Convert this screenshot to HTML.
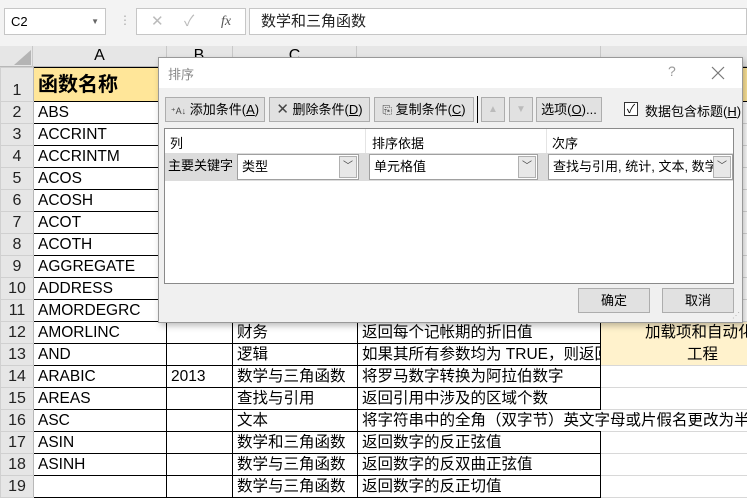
<!DOCTYPE html>
<html><head><meta charset="utf-8"><style>
*{box-sizing:border-box;margin:0;padding:0}
body{width:747px;height:481px;overflow:hidden;background:#fff;position:relative;font-family:"Liberation Sans","Noto Sans CJK SC",sans-serif;font-size:14px;color:#000}
.a{position:absolute}
table{position:absolute;left:0;top:67px;width:747px;border-collapse:collapse;table-layout:fixed}
td{height:22px;border:1px solid #000;padding:0 0 0 4px;white-space:nowrap;overflow:hidden;font-size:15.5px;line-height:20px}
td.h{background:#e6e6e6;border:1px solid #d0d0d0;border-right:1px solid #b8b8b8;text-align:center;padding:0;font-size:16px;color:#222}
td.y{background:#fff2cc;text-align:center;border-color:#fff2cc;border-bottom:1px dotted #999;overflow:visible;padding:0 0 0 44px;text-align:left}
td.e{border:1px solid #d8d8d8;border-left:1px solid #000}
td.v{overflow:visible}
.btn{position:absolute;background:#e1e1e1;border:1px solid #adadad;font-size:13px;text-align:center;line-height:23px;color:#000;white-space:nowrap}
.dd{position:absolute;background:#fff;border:1px solid #a0a0a0;font-size:13px;line-height:23px;padding-left:4px;overflow:hidden;white-space:nowrap}
.arr{position:absolute;right:1px;top:1px;width:18px;height:22px;background:#e8e8e8;border:1px solid #b0b0b0;font-size:10px;text-align:center;line-height:19px;color:#444}
</style></head><body>
<div class="a" style="left:0;top:0;width:747px;height:46px;background:#f3f3f3"></div>
<div class="a" style="left:4px;top:8px;width:102px;height:27px;background:#fff;border:1px solid #c6c6c6;font-size:13px;line-height:25px;padding-left:6px">C2<span style="position:absolute;right:6px;top:0;font-size:8px;color:#666">▼</span></div>
<div class="a" style="left:119px;top:13px;color:#aaa;font-size:12px">⋮</div>
<div class="a" style="left:136px;top:8px;width:110px;height:27px;background:#fff;border:1px solid #c6c6c6;color:#bbb;font-size:15px;line-height:25px"><span style="position:absolute;left:14px">✕</span><span style="position:absolute;left:47px">✓</span><span style="position:absolute;left:84px;color:#555;font-style:italic;font-family:'Liberation Serif',serif;font-size:14px">fx</span></div>
<div class="a" style="left:249px;top:8px;width:498px;height:27px;background:#fff;border:1px solid #c6c6c6;font-size:15px;line-height:25px;padding-left:11px;color:#222">数学和三角函数</div>
<div class="a" style="left:0;top:46px;width:747px;height:21px;background:#e6e6e6;border-bottom:1px solid #b8b8b8"></div>
<div class="a" style="left:14px;top:50px;width:0;height:0;border-left:17px solid transparent;border-bottom:15px solid #b4b4b4"></div>
<div class="a" style="left:32px;top:46px;width:1px;height:21px;background:#c8c8c8"></div>
<div class="a" style="left:33px;top:47px;width:133px;text-align:center;font-size:16px">A</div>
<div class="a" style="left:166px;top:46px;width:1px;height:21px;background:#c8c8c8"></div>
<div class="a" style="left:166px;top:47px;width:66px;text-align:center;font-size:16px">B</div>
<div class="a" style="left:232px;top:46px;width:1px;height:21px;background:#c8c8c8"></div>
<div class="a" style="left:232px;top:47px;width:125px;text-align:center;font-size:16px">C</div>
<div class="a" style="left:356px;top:46px;width:1px;height:21px;background:#c8c8c8"></div>
<div class="a" style="left:600px;top:46px;width:1px;height:21px;background:#c8c8c8"></div>
<table>
<colgroup><col style="width:33px"><col style="width:133px"><col style="width:66px"><col style="width:125px"><col style="width:243px"><col style="width:147px"></colgroup>
<tr style="height:34px"><td class="h" style="height:34px;vertical-align:bottom">1</td><td style="background:#ffe699;font-weight:bold;font-size:20px;height:34px">函数名称</td><td style="background:#ffe699"></td><td style="background:#ffe699"></td><td style="background:#ffe699"></td><td style="background:#ffe699"></td></tr>
<tr><td class="h">2</td><td>ABS</td><td></td><td></td><td></td><td class="e"></td></tr>
<tr><td class="h">3</td><td>ACCRINT</td><td></td><td></td><td></td><td class="e"></td></tr>
<tr><td class="h">4</td><td>ACCRINTM</td><td></td><td></td><td></td><td class="e"></td></tr>
<tr><td class="h">5</td><td>ACOS</td><td></td><td></td><td></td><td class="e"></td></tr>
<tr><td class="h">6</td><td>ACOSH</td><td></td><td></td><td></td><td class="e"></td></tr>
<tr><td class="h">7</td><td>ACOT</td><td></td><td></td><td></td><td class="e"></td></tr>
<tr><td class="h">8</td><td>ACOTH</td><td></td><td></td><td></td><td class="e"></td></tr>
<tr><td class="h">9</td><td>AGGREGATE</td><td></td><td></td><td></td><td class="e"></td></tr>
<tr><td class="h">10</td><td>ADDRESS</td><td></td><td></td><td></td><td class="e"></td></tr>
<tr><td class="h">11</td><td>AMORDEGRC</td><td></td><td></td><td></td><td class="e"></td></tr>
<tr><td class="h">12</td><td>AMORLINC</td><td></td><td>财务</td><td>返回每个记帐期的折旧值</td><td class="y">加载项和自动化</td></tr>
<tr><td class="h">13</td><td>AND</td><td></td><td>逻辑</td><td>如果其所有参数均为 TRUE，则返回</td><td class="y" style="padding-left:86px">工程</td></tr>
<tr><td class="h">14</td><td>ARABIC</td><td>2013</td><td>数学与三角函数</td><td>将罗马数字转换为阿拉伯数字</td><td class="e"></td></tr>
<tr><td class="h">15</td><td>AREAS</td><td></td><td>查找与引用</td><td>返回引用中涉及的区域个数</td><td class="e"></td></tr>
<tr><td class="h">16</td><td>ASC</td><td></td><td>文本</td><td class="v" style="border-right:none">将字符串中的全角（双字节）英文字母或片假名更改为半</td><td class="e" style="border-left:none"></td></tr>
<tr><td class="h">17</td><td>ASIN</td><td></td><td>数学和三角函数</td><td>返回数字的反正弦值</td><td class="e"></td></tr>
<tr><td class="h">18</td><td>ASINH</td><td></td><td>数学与三角函数</td><td>返回数字的反双曲正弦值</td><td class="e"></td></tr>
<tr><td class="h">19</td><td></td><td></td><td>数学与三角函数</td><td>返回数字的反正切值</td><td class="e"></td></tr>
</table>
<!-- dialog -->
<div class="a" style="left:158px;top:57px;width:585px;height:266px;background:#f0f0f0;border:1px solid #999;box-shadow:2px 3px 6px rgba(0,0,0,.25)">
 <div class="a" style="left:0;top:0;width:583px;height:30px;background:#fff"></div>
 <div class="a" style="left:9px;top:6px;font-size:13px;color:#888">排序</div>
 <div class="a" style="left:509px;top:5px;font-size:14px;color:#999">?</div>
 <svg class="a" style="left:552px;top:8px" width="14" height="14"><path d="M1 1L13 13M13 1L1 13" stroke="#777" stroke-width="1.2"/></svg>
 <div class="a" style="right:2px;bottom:2px;font-size:8px;color:#aaa;line-height:8px">⋰</div>
</div>
<div class="btn" style="left:165px;top:97px;width:100px;height:25px"><span style="font-size:9px;color:#444">⁺A↓</span> 添加条件(<u>A</u>)</div>
<div class="btn" style="left:269px;top:97px;width:101px;height:25px"><span style="font-size:15px;color:#444">✕</span> 删除条件(<u>D</u>)</div>
<div class="btn" style="left:374px;top:97px;width:100px;height:25px"><span style="font-size:12px;color:#444">⎘</span> 复制条件(<u>C</u>)</div>
<div class="a" style="left:477px;top:96px;width:1px;height:27px;background:#000"></div>
<div class="btn" style="left:481px;top:97px;width:24px;height:25px;color:#bbb;font-size:10px">▲</div>
<div class="btn" style="left:509px;top:97px;width:24px;height:25px;color:#bbb;font-size:10px">▼</div>
<div class="btn" style="left:536px;top:97px;width:66px;height:25px">选项(<u>O</u>)...</div>
<div class="a" style="left:624px;top:102px;width:14px;height:14px;border:1px solid #333;background:#fff;font-size:12px;line-height:12px;text-align:center">✓</div>
<div class="a" style="left:645px;top:101px;font-size:13px">数据包含标题(<u>H</u>)</div>
<div class="a" style="left:164px;top:128px;width:570px;height:156px;background:#fff;border:1px solid #8a8a8a"></div>
<div class="a" style="left:365px;top:129px;width:1px;height:25px;background:#e4e4e4"></div>
<div class="a" style="left:546px;top:129px;width:1px;height:25px;background:#e4e4e4"></div>
<div class="a" style="left:170px;top:133px;font-size:13px">列</div>
<div class="a" style="left:372px;top:133px;font-size:13px">排序依据</div>
<div class="a" style="left:552px;top:133px;font-size:13px">次序</div>
<div class="a" style="left:165px;top:153px;width:568px;height:28px;background:#dcdcdc"></div>
<div class="a" style="left:168px;top:155px;font-size:13px">主要关键字</div>
<div class="dd" style="left:237px;top:154px;width:122px;height:26px">类型<div class="arr">﹀</div></div>
<div class="dd" style="left:369px;top:154px;width:169px;height:26px">单元格值<div class="arr">﹀</div></div>
<div class="dd" style="left:548px;top:154px;width:185px;height:26px">查找与引用, 统计, 文本, 数学与<div class="arr">﹀</div></div>
<div class="btn" style="left:578px;top:288px;width:72px;height:25px">确定</div>
<div class="btn" style="left:662px;top:288px;width:72px;height:25px">取消</div>
</body></html>
